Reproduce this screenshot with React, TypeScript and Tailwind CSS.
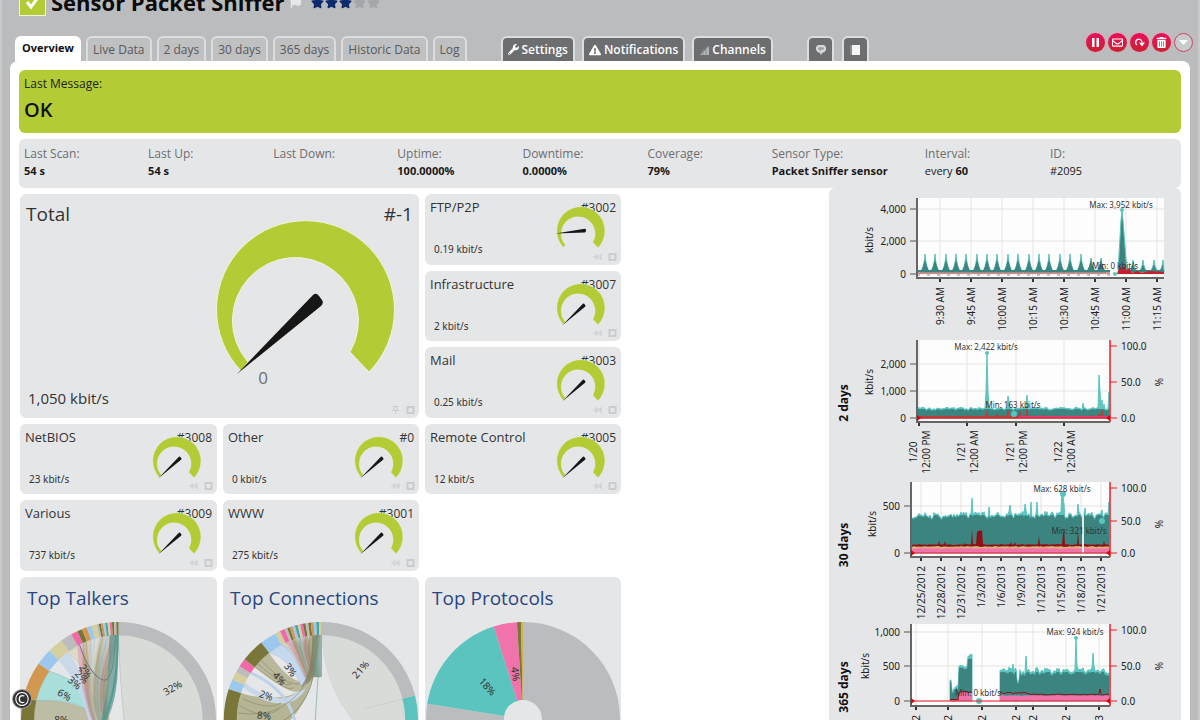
import type { ReactNode } from 'react'
import { FaExclamationTriangle, FaFlag, FaRegEnvelope, FaStar, FaTrashAlt, FaWrench } from 'react-icons/fa'

const GREEN = '#b3cc35'
const TEAL_LIGHT = '#5bc4bf'
const TEAL = '#3b8480'
const RED = '#ed1c24'
const PINK = '#f173ac'
const DARK_RED = '#8f1014'

type Point = [number, number]

// ---------- header ----------

const TABS = ['Overview', 'Live Data', '2 days', '30 days', '365 days', 'Historic Data', 'Log']

function SignalIcon() {
  return (
    <svg width="10" height="10" viewBox="0 0 10 10" aria-hidden="true">
      <path d="M10 1V10H1Z" fill="#b5b6b8" />
      <path d="M4 4V10M7 2V10" stroke="#8c8d8f" />
    </svg>
  )
}

function ChatIcon() {
  return (
    <svg width="13" height="12" viewBox="-1 0 13 12" aria-label="Comments">
      <path d="M3 1H9L11 3V6L9 8.500H7.500L6 11L4.500 8.500H3L1 6V3Z" fill="#d5d6d7" />
      <path d="M4 3.500V5.500M6 3V5L5 6.500M8 3.500V5.500" stroke="#6d6e70" fill="none" />
    </svg>
  )
}

function BookIcon() {
  return (
    <svg width="13" height="12" viewBox="-1 0 13 12" aria-label="History">
      <path d="M0 1H10V11H0Z" fill="#8a8b8d" />
      <path d="M2 1H10V11H2Z" fill="#f4f4f4" />
    </svg>
  )
}

function DarkTab({ icon, label }: { icon: ReactNode; label?: string }) {
  return (
    <button
      type="button"
      className="flex h-[25px] items-center gap-[3px] rounded-t-md border-2 border-b-0 border-[#dcddde] bg-[#6d6e70] px-[5px] text-xs font-semibold text-white"
    >
      {icon}
      {label}
    </button>
  )
}

function RoundButton({ label, hollow, children }: { label: string; hollow?: boolean; children: ReactNode }) {
  return (
    <button
      type="button"
      aria-label={label}
      className={
        hollow
          ? 'flex size-[19px] items-center justify-center rounded-full border border-[#c8475f] bg-[#c9cacc] text-white'
          : 'flex size-[19px] items-center justify-center rounded-full bg-linear-to-b from-[#ec0a5c] to-[#c8202f] text-white ring-1 ring-[#dba9b5]'
      }
    >
      {children}
    </button>
  )
}

function Header() {
  return (
    <header className="pr-[5px] pl-[13px]">
      <div className="-mt-3 flex h-7 items-center pl-1">
        <span className="flex size-[27px] items-center justify-center border border-[#f2f5dc] bg-[#b3cc35]">
          <svg width="18" height="18" viewBox="0 0 18 18" aria-hidden="true">
            <path d="M3 9L7 14L15 3" stroke="#fff" strokeWidth="3" fill="none" />
          </svg>
        </span>
        <h1 className="ml-[5px] text-[22px] leading-[26px] font-bold text-[#0b0b0b]">Sensor Packet Sniffer</h1>
        <FaFlag size={11} className="ml-1.5 text-[#e6e7e8]" aria-hidden="true" />
        <span className="ml-2.5 flex gap-px" role="img" aria-label="Priority 3 of 5">
          {[1, 2, 3, 4, 5].map((n) => (
            <FaStar key={n} size={13} className={n <= 3 ? 'text-[#0c2c6e]' : 'text-[#a5a6a9]'} />
          ))}
        </span>
      </div>

      <div className="mt-5 flex h-[25px] items-end">
        <nav className="flex gap-[5px]">
          {TABS.map((tab, i) => (
            <button
              key={tab}
              type="button"
              className={
                i === 0
                  ? 'h-[25px] rounded-t-md bg-white px-[7px] text-[11px] font-bold text-[#111]'
                  : 'h-[25px] rounded-t-md border-2 border-b-0 border-[#dcddde] bg-[#bfc0c2] px-[5px] text-xs text-[#58595b]'
              }
            >
              {tab}
            </button>
          ))}
        </nav>
        <div className="ml-[34px] flex gap-[7px]">
          <DarkTab icon={<FaWrench size={11} />} label="Settings" />
          <DarkTab icon={<FaExclamationTriangle size={12} />} label="Notifications" />
          <DarkTab icon={<SignalIcon />} label="Channels" />
        </div>
        <div className="ml-[34px] flex gap-2">
          <DarkTab icon={<ChatIcon />} />
          <DarkTab icon={<BookIcon />} />
        </div>
        <div className="mb-[9px] ml-auto flex gap-[3px] self-end">
          <RoundButton label="Pause">
            <svg width="9" height="9" viewBox="0 0 9 9">
              <path d="M1 0H3.500V9H1ZM5.500 0H8V9H5.500Z" fill="currentColor" />
            </svg>
          </RoundButton>
          <RoundButton label="Send mail">
            <FaRegEnvelope size={11} />
          </RoundButton>
          <RoundButton label="Scan now">
            <svg width="13" height="11" viewBox="0 0 13 11">
              <path d="M4 8A3.200 3.200 0 1 1 9 5" stroke="currentColor" strokeWidth="1.300" fill="none" />
              <path d="M6 5.500H12L9 9.500Z" fill="currentColor" />
            </svg>
          </RoundButton>
          <RoundButton label="Delete">
            <FaTrashAlt size={11} />
          </RoundButton>
          <RoundButton label="More" hollow>
            <svg width="9" height="5" viewBox="0 0 9 5">
              <path d="M0 0H9L4.500 5Z" fill="currentColor" />
            </svg>
          </RoundButton>
        </div>
      </div>
    </header>
  )
}

// ---------- status strip ----------

const STATUS: { label: string; value: ReactNode }[] = [
  { label: 'Last Scan:', value: <b>54 s</b> },
  { label: 'Last Up:', value: <b>54 s</b> },
  { label: 'Last Down:', value: '' },
  { label: 'Uptime:', value: <b>100.0000%</b> },
  { label: 'Downtime:', value: <b>0.0000%</b> },
  { label: 'Coverage:', value: <b>79%</b> },
  { label: 'Sensor Type:', value: <b>Packet Sniffer sensor</b> },
  { label: 'Interval:', value: <>every <b>60</b></> },
  { label: 'ID:', value: '#2095' },
]

function StatusStrip() {
  return (
    <dl className="mt-1.5 grid h-[49px] grid-cols-[124fr_125fr_124fr_125fr_125fr_124fr_153fr_125fr_131fr] rounded-md bg-[#e5e6e8] pt-1.5 pl-[5px]">
      {STATUS.map((s) => (
        <div key={s.label} className="whitespace-nowrap">
          <dt className="text-xs leading-[18px] text-[#6d6e70]">{s.label}</dt>
          <dd className="text-[11px] leading-4 text-[#1a1a1a]">{s.value}</dd>
        </div>
      ))}
    </dl>
  )
}

// ---------- gauges ----------

function Gauge({ turn = 0, className }: { turn?: number; className: string }) {
  return (
    <svg viewBox="-100 -95 200 190" className={className} aria-hidden="true">
      <path
        d="M-65 62A89 89 0 1 1 63 63L44 43A63 63 0 1 0 -58 53Z"
        fill={GREEN}
        stroke="#f1f5d8"
        strokeWidth="1"
      />
      <g transform={`rotate(${turn})`}>
        <path d="M-69 65L7 -14Q10 -17 13 -13L16 -9Q18 -6 15 -3Z" fill="#161616" />
      </g>
    </svg>
  )
}

function CardTools({ pinned }: { pinned?: boolean }) {
  return (
    <span className="absolute right-1 bottom-1 flex gap-1.5">
      <svg width="9" height="8" viewBox="0 0 9 8" aria-hidden="true">
        <path
          d={pinned ? 'M2 .5H7M3 1V4M6 1V4M1 4.500H8M4.500 4V8' : 'M0 4H3M3 1V7M8 1V7M3 3H8M3 5H8'}
          stroke="#cbccce"
          fill="none"
        />
      </svg>
      <svg width="9" height="8" viewBox="0 0 9 8" aria-hidden="true">
        <path d="M1.500 1H7.500V7H1.500Z" stroke="#cbccce" strokeWidth="2" fill="none" />
      </svg>
    </span>
  )
}

type Channel = { name: string; id: string; value: string; turn?: number }

function ChannelCard({ name, id, value, turn }: Channel) {
  return (
    <section className="relative flex flex-col rounded-md bg-[#e5e6e8] px-[5px] pt-1 text-[#333]">
      <div className="flex items-baseline justify-between text-[13px] leading-[18px]">
        <h2>{name}</h2>
        <span className="text-xs leading-[18px]">{id}</span>
      </div>
      <p className="mt-6 pl-1 font-[Noto_Sans] text-[10px] leading-4">{value}</p>
      <Gauge turn={turn} className="absolute top-[11px] right-[13px] w-[54px]" />
      <CardTools />
    </section>
  )
}

function TotalCard() {
  return (
    <section className="relative col-span-2 row-span-3 flex flex-col justify-between rounded-md bg-[#e5e6e8] px-[6px] pt-1.5 pb-2 text-[#333]">
      <div className="flex justify-between text-[19px] leading-7">
        <h2>Total</h2>
        <span>#-1</span>
      </div>
      <p className="pl-0.5 text-[15px] leading-6">1,050 kbit/s</p>
      <Gauge className="absolute top-5 right-[13px] w-[200px]" />
      <span className="absolute right-[151px] bottom-7 text-[17px] leading-6 text-[#6d6e70]">0</span>
      <CardTools pinned />
    </section>
  )
}

// ---------- ring diagrams ----------

// degrees clockwise from twelve o'clock
function polar(r: number, deg: number): string {
  const a = (deg * Math.PI) / 180
  return `${(r * Math.sin(a)).toFixed(1)} ${(-r * Math.cos(a)).toFixed(1)}`
}

function ring(r1: number, r2: number, from: number, to: number): string {
  const large = to - from > 180 ? 1 : 0
  return `M${polar(r2, from)}A${r2} ${r2} 0 ${large} 1 ${polar(r2, to)}L${polar(r1, to)}A${r1} ${r1} 0 ${large} 0 ${polar(r1, from)}Z`
}

function ribbon(from: number, to: number, x: number, y: number, w: number): string {
  return `M${polar(84, from)}A84 84 0 0 1 ${polar(84, to)}Q${x + w - 6} ${y - 36} ${x + w} ${y}L${x} ${y}Q${x - 12} ${y - 28} ${polar(84, from)}Z`
}

type Segment = { from: number; to: number; color: string }
type RingLabel = { text: string; x: number; y: number; turn: number }

const THIN = ['#bbbcbe', '#7a763a', '#d3984f', '#9cc8ee', '#4aa59d', '#d4cf9c', '#f06aa8', '#7a763a']

function thinSegments(start: number, step: number): Segment[] {
  const list: Segment[] = []
  for (let a = start, i = 0; a < 0; a += step, i++) {
    list.push({ from: a, to: Math.min(a + step, 0), color: THIN[i % THIN.length] })
  }
  return list
}

const TALKERS: Segment[] = [
  { from: 0, to: 130, color: '#bbbcbe' },
  { from: -110, to: -77, color: '#7a763a' },
  { from: -77, to: -55, color: '#d3984f' },
  { from: -55, to: -45, color: '#9cc8ee' },
  { from: -45, to: -36, color: '#d4cf9c' },
  { from: -36, to: -29, color: '#bbbcbe' },
  { from: -29, to: -25, color: '#f06aa8' },
  { from: -25, to: -22, color: '#7a763a' },
  { from: -22, to: -19, color: '#d3984f' },
  { from: -19, to: -16, color: '#9cc8ee' },
  { from: -16, to: -13, color: '#d4cf9c' },
  ...thinSegments(-13, 1.3),
]

const CONNECTIONS: Segment[] = [
  { from: 0, to: 76, color: '#bbbcbe' },
  { from: 76, to: 130, color: '#5bc4bf' },
  { from: -110, to: -72, color: '#7a763a' },
  { from: -72, to: -66, color: '#9cc8ee' },
  { from: -66, to: -61, color: '#d4cf9c' },
  { from: -61, to: -57, color: '#bbbcbe' },
  { from: -57, to: -52, color: '#f06aa8' },
  { from: -52, to: -38, color: '#7a763a' },
  { from: -38, to: -28, color: '#9cc8ee' },
  { from: -28, to: -25, color: '#d4cf9c' },
  { from: -25, to: -22, color: '#f06aa8' },
  ...thinSegments(-22, 1.6),
]

function RingLabels({ labels }: { labels: RingLabel[] }) {
  return (
    <g fontFamily="Noto Sans" fontSize="10" fill="#333" textAnchor="middle">
      {labels.map((l, i) => (
        <text key={i} transform={`translate(${l.x} ${l.y}) rotate(${l.turn})`} y="3">
          {l.text}
        </text>
      ))}
    </g>
  )
}

function RingCard({ title, children }: { title: string; children: ReactNode }) {
  return (
    <section className="rounded-md bg-[#e5e6e8] pt-1.5">
      <h2 className="pl-[7px] text-[19px] leading-[30px] whitespace-nowrap text-[#2a4680]">{title}</h2>
      <svg viewBox="-98 -98 196 196" className="mt-2 w-full">
        {children}
      </svg>
    </section>
  )
}

function TopTalkers() {
  return (
    <RingCard title="Top Talkers">
      <path d="M0 -84A84 84 0 0 1 76 36L10 36Q2 -20 0 -84Z" fill="#d9dbd9" stroke="#c6c8c6" />
      <path d={ribbon(-110, -77, -22, 16, 8)} fill="#bdbda6" stroke="#a5a58c" strokeWidth="0.500" />
      <path d={ribbon(-77, -55, -18, 6, 8)} fill="#a9dedb" stroke="#7dbdb9" strokeWidth="0.500" />
      <path d="M-60 -59Q-38 -36 -29 4L-20 4Q-30 -40 -50 -67Z" fill="#c7d7e9" opacity="0.900" />
      <path d="M-50 -67Q-30 -50 -34 -30Q-26 -28 -26 -40Q-30 -56 -41 -73Z" fill="#dcdac8" stroke="#c3b98f" strokeWidth="0.500" />
      {TALKERS.slice(6).map((s, i) => (
        <path key={i} d={ribbon(s.from, s.to, -26 + i, 2, 3)} fill={s.color} opacity="0.350" stroke="#8d8f86" strokeWidth="0.300" />
      ))}
      <path d="M-39 -75Q-28 -42 -14 -39Q-4 -40 -3 -84" fill="none" stroke="#777" />
      <path d="M-9 -84H0L-1 -42Q-4 -10 -14 4L-18 4Q-10 -30 -9 -84Z" fill="#5c9086" opacity="0.700" />
      <path d="M-1 -84Q0 -30 -16 4" fill="none" stroke="#4f9c92" strokeWidth="2" />
      {TALKERS.map((s, i) => (
        <path key={i} d={ring(84, 97, s.from, s.to)} fill={s.color} />
      ))}
      <RingLabels
        labels={[
          { text: '32%', x: 54, y: -31, turn: -30 },
          { text: '6%', x: -54, y: -24, turn: 30 },
          { text: '3%', x: -44, y: -36, turn: 40 },
          { text: '2%', x: -37, y: -42, turn: 46 },
          { text: '2%', x: -33, y: -48, turn: 55 },
          { text: '8%', x: -57, y: 1, turn: 0 },
        ]}
      />
    </RingCard>
  )
}

function TopConnections() {
  return (
    <RingCard title="Top Connections">
      <path d="M1 -84A84 84 0 0 1 82 -20L84 30L50 20Q4 -20 1 -84Z" fill="#d9dbd9" stroke="#cbcdcb" strokeWidth="0.500" />
      <path d="M82 -20L42 -10" stroke="#c0c1c1" strokeWidth="0.500" />
      <path d="M-80 -26A84 84 0 0 0 -78 30L-36 6Q-14 -12 -7 -50Q-16 -24 -40 -22Q-64 -20 -80 -26Z" fill="#b5b596" />
      <path d="M-77 -34Q-46 -10 -26 -22Q-8 -34 -4 -84" fill="none" stroke="#c9d8e8" strokeWidth="5" />
      <path d="M-70 -46Q-34 -30 -26 2" fill="none" stroke="#bdd2ea" strokeWidth="3" />
      <path d="M-66 -52A84 84 0 0 1 -52 -66Q-30 -34 -16 -38Q-8 -50 -4 -84L-1 -84Q-4 -36 -16 -30Q-22 -26 -30 -28Q-44 -34 -66 -52Z" fill="#b9b89c" />
      <path d="M-66 -52Q-30 -24 -28 -32M-63 -55Q-32 -28 -30 -36M-60 -59Q-34 -30 -18 -36M-78 -20Q-52 -8 -40 -16M-82 -14Q-58 2 -42 -10M-83 -6Q-30 2 -8 -50" fill="none" stroke="#8f8d66" strokeWidth="0.700" />
      <path d={ribbon(-38, -28, -20, -34, 6)} fill="#c5d9ee" stroke="#a9bfd6" strokeWidth="0.500" />
      {CONNECTIONS.slice(9).map((s, i) => (
        <path key={i} d={ribbon(s.from, s.to, -17 + i, -42, 2)} fill={s.color} opacity="0.400" stroke="#77785c" strokeWidth="0.400" />
      ))}
      <path d="M-9 -84H-3L-5 -50Q-8 -36 -20 -32Q-8 -50 -9 -84Z" fill="#7d7b5c" opacity="0.700" />
      <path d="M-4 -84H1V-42H-8Z" fill="#6f948a" opacity="0.650" />
      <path d="M-7 -50Q-10 -16 -38 2" fill="none" stroke="#8b8f70" />
      <path d="M-3 -42L-6 6" stroke="#7fa89f" strokeWidth="0.700" />
      {CONNECTIONS.map((s, i) => (
        <path key={i} d={ring(84, 97, s.from, s.to)} fill={s.color} />
      ))}
      <RingLabels
        labels={[
          { text: '21%', x: 40, y: -49, turn: -48 },
          { text: '3%', x: -31, y: -49, turn: 55 },
          { text: '4%', x: -42, y: -40, turn: 48 },
          { text: '2%', x: -55, y: -23, turn: 18 },
          { text: '8%', x: -57, y: -3, turn: 5 },
        ]}
      />
    </RingCard>
  )
}

function TopProtocols() {
  return (
    <RingCard title="Top Protocols">
      <path d={ring(19, 97, 0, 180)} fill="#bbbcbe" />
      <path d={ring(19, 97, -180, -81)} fill="#bbbcbe" />
      <path d={ring(19, 97, -81, -17.6)} fill="#5bc4bf" />
      <path d={ring(19, 97, -17.6, -3.6)} fill="#f173ac" />
      <path d={ring(19, 97, -3.6, -1.2)} fill="#7a763a" />
      <path d={ring(19, 97, -1.2, 0)} fill="#d3b04f" />
      <RingLabels
        labels={[
          { text: '18%', x: -36, y: -32, turn: 48 },
          { text: '4%', x: -8, y: -45, turn: 82 },
        ]}
      />
    </RingCard>
  )
}

// ---------- history graphs ----------

// repeatable jitter in 0..1
function jitter(n: number): number {
  const v = Math.sin(n * 12.9898) * 43758.5453
  return v - Math.floor(v)
}

function wave(from: number, to: number, base: number, amp: number, peaks: Point[] = []): Point[] {
  const points: Point[] = []
  for (let x = from; x <= to; x++) {
    const peak = peaks.find((p) => p[0] === x)
    points.push([x, peak ? peak[1] : base - amp * (0.6 * jitter(Math.floor(x / 3) + base) + 0.4 * jitter(x))])
  }
  return points
}

function area(points: Point[], floor: number): string {
  const line = points.map((p) => `L${p[0]} ${p[1].toFixed(1)}`).join('')
  return `M${points[0][0]} ${floor}${line}L${points[points.length - 1][0]} ${floor}Z`
}

function polyline(points: Point[]): string {
  return points.map((p) => `${p[0]},${p[1].toFixed(1)}`).join(' ')
}

type GraphProps = {
  label?: string
  left: number
  right: number
  bottom: number
  zero: number
  unitX: number
  yTicks: { y: number; text: string }[]
  percentTicks?: { y: number; text: string }[]
  xTicks: { x: number; lines: string[] }[]
  max: { x: number; y: number; text: string }
  min: { x: number; y: number; text: string }
  children: ReactNode
}

function Graph(props: GraphProps) {
  const { label, left, right, bottom, zero, unitX, yTicks, percentTicks, xTicks, max, min } = props
  return (
    <svg viewBox="0 0 352 142" className="w-full overflow-visible font-[Noto_Sans]" fontSize="10" fill="#222">
      <rect x={left} y="8" width={right - left} height={bottom - 8} fill="#fdfdfd" />
      {yTicks.map((t) => (
        <g key={t.text}>
          <path d={`M${left} ${t.y}H${right}`} stroke="#e6e4e0" />
          <path d={`M${left - 7} ${t.y}H${left}`} stroke="#555" />
          <text x={left - 11} y={t.y + 4} textAnchor="end">{t.text}</text>
        </g>
      ))}
      {xTicks.map((t) => (
        <g key={t.x}>
          <path d={`M${t.x} 8V${bottom}`} stroke="#e6e4e0" />
          <path d={`M${t.x} ${bottom}V${bottom + 4}`} stroke="#333" strokeWidth="2" />
          {t.lines.length === 1 ? (
            <text transform={`translate(${t.x + 4} ${bottom + 9}) rotate(-90)`} textAnchor="end">
              {t.lines[0]}
            </text>
          ) : (
            t.lines.map((line, i) => (
              <text
                key={line}
                transform={`translate(${t.x - 2 + i * 13} ${bottom + 30}) rotate(-90)`}
                textAnchor="middle"
              >
                {line}
              </text>
            ))
          )}
        </g>
      ))}
      {props.children}
      <path d={`M${left} 8V${bottom}H${right}`} stroke="#666" strokeWidth="2" fill="none" />
      {percentTicks && (
        <>
          <path d={`M${left} ${zero}H${right}`} stroke={RED} />
          <path d={`M${right} 8V${bottom}`} stroke={RED} strokeWidth="1.500" />
          <path d={`M${left} ${zero - 3}L${left + 4} ${zero}L${left} ${zero + 3}ZM${right} ${zero - 3}L${right - 4} ${zero}L${right} ${zero + 3}Z`} fill="#d9000d" />
          {percentTicks.map((t) => (
            <g key={t.text}>
              <path d={`M${right} ${t.y}H${right + 7}`} stroke={RED} />
              <text x={right + 11} y={t.y + 4}>{t.text}</text>
            </g>
          ))}
          <text transform="translate(334 50) rotate(-90)" textAnchor="middle">%</text>
        </>
      )}
      <g fontSize="8" textAnchor="middle" fill="#333">
        <text x={max.x} y={max.y}>{max.text}</text>
        <text x={min.x} y={min.y}>{min.text}</text>
      </g>
      <text transform={`translate(${unitX + 3} 50) rotate(-90)`} textAnchor="middle">kbit/s</text>
      {label && (
        <text
          transform="translate(19 71) rotate(-90)"
          textAnchor="middle"
          fontFamily="Open Sans"
          fontWeight="700"
          fontSize="12"
          fill="#111"
        >
          {label}
        </text>
      )}
    </svg>
  )
}

// cap limits how high the dark body reaches above the floor
function Layer({ points, floor, light, cap }: { points: Point[]; floor: number; light: number; cap: number }) {
  return (
    <>
      <path d={area(points, floor)} fill={TEAL_LIGHT} stroke={TEAL_LIGHT} strokeWidth="1" />
      <path d={area(points.map((p) => [p[0], Math.max(p[1] + light, floor - cap)]), floor)} fill={TEAL} />
    </>
  )
}

const LIVE_PEAKS = [96, 106, 117, 127, 137, 148, 158, 168, 179, 189, 200, 210, 220, 231, 241, 252, 262, 272]

function LiveGraph() {
  return (
    <Graph
      left={88}
      right={335}
      bottom={88}
      zero={84}
      unitX={41}
      yTicks={[
        { y: 19, text: '4,000' },
        { y: 51, text: '2,000' },
        { y: 84, text: '0' },
      ]}
      xTicks={[
        { x: 111, lines: ['9:30 AM'] },
        { x: 142, lines: ['9:45 AM'] },
        { x: 173, lines: ['10:00 AM'] },
        { x: 204, lines: ['10:15 AM'] },
        { x: 235, lines: ['10:30 AM'] },
        { x: 266, lines: ['10:45 AM'] },
        { x: 297, lines: ['11:00 AM'] },
        { x: 328, lines: ['11:15 AM'] },
      ]}
      max={{ x: 292, y: 18, text: 'Max: 3,952 kbit/s' }}
      min={{ x: 286, y: 79, text: 'Min: 0 kbit/s' }}
    >
      {LIVE_PEAKS.map((x, i) => (
        <g key={x}>
          <path d={`M${x - 5} 82Q${x - 1} 79 ${x} ${i > 15 ? 68 : 64}Q${x + 1} 79 ${x + 5} 82Z`} fill={TEAL_LIGHT} stroke={TEAL_LIGHT} />
          <path d={`M${x - 5} 82Q${x - 2} 79 ${x} 69Q${x + 2} 79 ${x + 5} 82Z`} fill={TEAL} />
        </g>
      ))}
      {[304, 314, 325, 334].map((x) => (
        <path key={x} d={`M${x - 5} 82Q${x - 1} 80 ${x} 70Q${x + 1} 80 ${Math.min(x + 5, 335)} 82Z`} fill={TEAL} stroke={TEAL_LIGHT} />
      ))}
      <path d="M289 83L292 30L293 20L294 30L298 83Z" fill={TEAL} stroke={TEAL_LIGHT} />
      <path d="M88 81H281M297 81H335" stroke={TEAL} strokeWidth="2" />
      <path d="M88 83H281M297 83H335" stroke="#a5312b" strokeWidth="1" />
      <path d="M288 84L291 76L293 80L295 75L297 80L300 78L303 83L308 81L313 83L320 81L335 82V84Z" fill="#c3202e" />
      <path d="M88 85H281" stroke="#8f83c4" strokeDasharray="3 7" />
      <circle cx="293" cy="20" r="2" fill={TEAL_LIGHT} />
      <circle cx="286" cy="84" r="2" fill={TEAL_LIGHT} />
    </Graph>
  )
}

function TwoDayGraph() {
  const traffic = wave(89, 280, 78, 3, [
    [157, 60], [158, 22], [159, 60], [179, 64], [180, 70], [198, 63], [199, 70], [254, 71],
    [270, 43], [271, 60], [273, 68], [275, 72], [280, 60],
  ])
  const load = wave(89, 280, 85, 1, [[158, 79], [168, 82], [179, 78], [191, 79], [198, 77], [270, 81], [273, 78]])
  return (
    <Graph
      label="2 days"
      left={88}
      right={281}
      bottom={90}
      zero={86}
      unitX={41}
      yTicks={[
        { y: 32, text: '2,000' },
        { y: 59, text: '1,000' },
        { y: 86, text: '0' },
      ]}
      percentTicks={[
        { y: 14, text: '100.0' },
        { y: 50, text: '50.0' },
        { y: 86, text: '0.0' },
      ]}
      xTicks={[
        { x: 90, lines: ['1/20', '12:00 PM'] },
        { x: 138, lines: ['1/21', '12:00 AM'] },
        { x: 187, lines: ['1/21', '12:00 PM'] },
        { x: 235, lines: ['1/22', '12:00 AM'] },
      ]}
      max={{ x: 157, y: 18, text: 'Max: 2,422 kbit/s' }}
      min={{ x: 184, y: 76, text: 'Min: 163 kbit/s' }}
    >
      <Layer points={traffic} floor={86} light={1} cap={9} />
      <path d={area(load, 86)} fill="#b5403a" stroke="#b5403a" />
      <path d="M190 85H281" stroke="#e03a78" strokeWidth="2" />
      <circle cx="158" cy="21" r="2" fill={TEAL_LIGHT} />
      <circle cx="185" cy="82" r="3" fill={TEAL_LIGHT} />
    </Graph>
  )
}

function ThirtyDayGraph() {
  const traffic = wave(82, 280, 45, 8, [
    [143, 24], [160, 33], [181, 31], [196, 30], [197, 36], [202, 28], [208, 28], [233, 20], [234, 22], [235, 30],
    [249, 30], [256, 34], [273, 36], [280, 28],
  ])
  const load = wave(82, 280, 71, 1, [
    [110, 67], [116, 67], [136, 69], [143, 55], [148, 58], [149, 57], [150, 57], [151, 56], [152, 57], [153, 56],
    [182, 68], [186, 68], [210, 62], [234, 60], [235, 55], [249, 58], [275, 67],
  ])
  return (
    <Graph
      label="30 days"
      left={82}
      right={281}
      bottom={83}
      zero={79}
      unitX={44}
      yTicks={[
        { y: 32, text: '500' },
        { y: 79, text: '0' },
      ]}
      percentTicks={[
        { y: 14, text: '100.0' },
        { y: 47, text: '50.0' },
        { y: 79, text: '0.0' },
      ]}
      xTicks={[
        { x: 92, lines: ['12/25/2012'] },
        { x: 112, lines: ['12/28/2012'] },
        { x: 132, lines: ['12/31/2012'] },
        { x: 152, lines: ['1/3/2013'] },
        { x: 172, lines: ['1/6/2013'] },
        { x: 192, lines: ['1/9/2013'] },
        { x: 212, lines: ['1/12/2013'] },
        { x: 232, lines: ['1/15/2013'] },
        { x: 252, lines: ['1/18/2013'] },
        { x: 272, lines: ['1/21/2013'] },
      ]}
      max={{ x: 233, y: 18, text: 'Max: 628 kbit/s' }}
      min={{ x: 250, y: 60, text: 'Min: 321 kbit/s' }}
    >
      <Layer points={traffic} floor={79} light={1} cap={38} />
      <path d={area(load, 79)} fill={DARK_RED} />
      <path d={area(wave(82, 280, 73, 1), 79)} fill="#d9b27c" />
      <path d={area(wave(82, 280, 75, 1), 79)} fill={PINK} />
      <path d="M254 40V79" stroke="#dfe9e8" strokeWidth="2" />
      <circle cx="234" cy="20" r="3" fill={TEAL_LIGHT} />
      <circle cx="273" cy="47" r="3" fill={TEAL_LIGHT} />
    </Graph>
  )
}

function YearGraph() {
  const rise = [...wave(121, 129, 77, 8, [[121, 64], [122, 64]]), ...wave(130, 138, 52, 3), ...wave(139, 143, 42, 4)]
  const traffic = wave(171, 280, 59, 8, [
    [184, 48], [197, 40], [188, 64], [189, 66], [190, 64], [247, 23], [248, 50], [264, 37], [265, 50],
  ])
  return (
    <Graph
      label="365 days"
      left={82}
      right={281}
      bottom={90}
      zero={85}
      unitX={37}
      yTicks={[
        { y: 16, text: '1,000' },
        { y: 50, text: '500' },
        { y: 85, text: '0' },
      ]}
      percentTicks={[
        { y: 14, text: '100.0' },
        { y: 50, text: '50.0' },
        { y: 85, text: '0.0' },
      ]}
      xTicks={[
        { x: 87, lines: ['2012'] },
        { x: 119, lines: ['2012'] },
        { x: 153, lines: ['2012'] },
        { x: 187, lines: ['2012'] },
        { x: 204, lines: ['2012'] },
        { x: 237, lines: ['2012'] },
        { x: 270, lines: ['2013'] },
      ]}
      max={{ x: 246, y: 19, text: 'Max: 924 kbit/s' }}
      min={{ x: 149, y: 80, text: 'Min: 0 kbit/s' }}
    >
      <Layer points={rise} floor={85} light={2} cap={42} />
      <Layer points={traffic} floor={85} light={2} cap={29} />
      <path d={area([...wave(121, 129, 84, 1), ...wave(130, 143, 77, 2)], 85)} fill={PINK} />
      <path d={area(wave(171, 280, 80, 1), 85)} fill={PINK} />
      <polyline points={polyline([...wave(121, 129, 84, 1), ...wave(130, 143, 77, 2)])} fill="none" stroke={DARK_RED} />
      <polyline points={polyline(wave(171, 200, 78, 2))} fill="none" stroke={DARK_RED} />
      <polyline points={polyline(wave(200, 280, 79, 1, [[271, 73]]))} fill="none" stroke={DARK_RED} />
      <circle cx="247" cy="22" r="2" fill={TEAL_LIGHT} />
      <circle cx="150" cy="85" r="3" fill={TEAL_LIGHT} />
    </Graph>
  )
}

// ---------- page ----------

export default function App() {
  return (
    <div className="h-screen overflow-hidden border-x-2 border-[#c9cacc] bg-[#bbbcbe] font-['Open_Sans',sans-serif]">
      <Header />
      <main className="mx-2 rounded-t-lg bg-white px-[9px] pt-[9px]">
        <div className="h-[63px] rounded-md bg-[#b3cc35] px-[5px] pt-1 text-[#222]">
          <p className="text-xs leading-5">Last Message:</p>
          <p className="pt-1 text-xl leading-6 font-semibold text-[#111]">OK</p>
        </div>
        <StatusStrip />

        <div className="flex justify-between">
          <div className="mt-1.5 ml-px grid auto-rows-auto grid-cols-[197px_196px_196px] grid-rows-[71px_70px_71px_70px_71px] gap-1.5">
            <TotalCard />
            <ChannelCard name="FTP/P2P" id="#3002" value="0.19 kbit/s" turn={37} />
            <ChannelCard name="Infrastructure" id="#3007" value="2 kbit/s" />
            <ChannelCard name="Mail" id="#3003" value="0.25 kbit/s" />
            <ChannelCard name="NetBIOS" id="#3008" value="23 kbit/s" />
            <ChannelCard name="Other" id="#0" value="0 kbit/s" />
            <ChannelCard name="Remote Control" id="#3005" value="12 kbit/s" />
            <ChannelCard name="Various" id="#3009" value="737 kbit/s" />
            <ChannelCard name="WWW" id="#3001" value="275 kbit/s" />
            <div />
            <TopTalkers />
            <TopConnections />
            <TopProtocols />
          </div>

          <aside className="flex w-[352px] shrink-0 flex-col rounded-t-md bg-[#e5e6e8] pt-0.5">
            <LiveGraph />
            <TwoDayGraph />
            <ThirtyDayGraph />
            <YearGraph />
          </aside>
        </div>
      </main>

      <span className="fixed bottom-3 left-[13px] flex size-[18px] items-center justify-center rounded-full bg-[#333] text-lg leading-none text-white ring-1 ring-[#999]">
        ©
      </span>
    </div>
  )
}
